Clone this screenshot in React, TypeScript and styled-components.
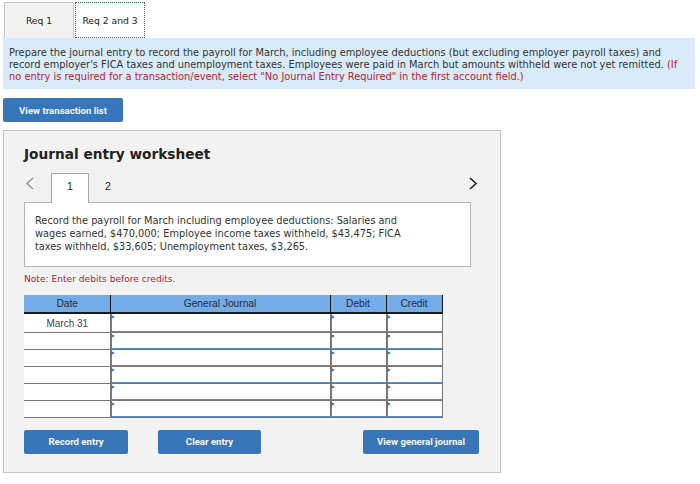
import React from 'react';
import styled, {createGlobalStyle} from 'styled-components';

const GlobalStyle = createGlobalStyle`
  html, body {
    margin: 0;
    padding: 0;
    background-color: white;
  }
  body {
    font-family: "DejaVu Sans", Verdana, sans-serif;
    font-size: 9.8px;
    color: #333333;
  }
`
const Page = styled.div`
  width: 700px;
  height: 484px;
  padding: 2px 5px 0 3px;
  box-sizing: border-box;
  overflow: hidden;
`
const Tabs = styled.div`
  display: flex;
  padding-left: 1px;
  gap: 1px;
`
const Tab = styled.div<{ $active?: boolean }>`
  width: 70px;
  height: 36px;
  box-sizing: border-box;
  display: flex;
  align-items: center;
  justify-content: center;
  font-size: 9.2px;
  color: #222222;
  background-color: ${p => p.$active ? 'white' : '#f2f2f2'};
  border: 1px ${p => p.$active ? 'dotted #2f5f9f' : 'solid #c4c4c4'};
  border-bottom: ${p => p.$active ? '1px dotted #2f5f9f' : 'none'};
`
const Instructions = styled.div`
  background-color: #d9ebfa;
  height: 51px;
  box-sizing: border-box;
  padding: 9px 6px 0;
  font-size: 9.85px;
  line-height: 12px;
  color: #333333;
  white-space: nowrap;
`
const Red = styled.span`
  color: #b4232f;
`
const Button = styled.button<{ $width: number }>`
  width: ${p => p.$width}px;
  height: 24px;
  padding: 0;
  border: none;
  border-radius: 2px;
  background-color: #3975b9;
  color: #f2f6fb;
  font-family: Roboto, "Liberation Sans", sans-serif;
  font-size: 9.6px;
  font-weight: 700;
`
const TopAction = styled.div`
  margin: 9px 0 8px;
  display: flex;
`
const Panel = styled.div`
  width: 498px;
  height: 343px;
  box-sizing: border-box;
  padding: 0 20px;
  background-color: #f2f2f2;
  border: 1px solid #c4c4c4;
`
const Title = styled.h2`
  margin: 0;
  padding-top: 14px;
  height: 42px;
  box-sizing: border-box;
  font-size: 13.7px;
  line-height: 18px;
  font-weight: 700;
  color: #222222;
`
const Pager = styled.div`
  display: flex;
  align-items: stretch;
  height: 30px;
  margin-bottom: -1px;
  position: relative;
  z-index: 1;
`
const Arrow = styled.svg`
  width: 27px;
  height: 22px;
  flex: none;
`
const PageTab = styled.div<{ $active?: boolean }>`
  width: 38px;
  box-sizing: border-box;
  padding-bottom: 6px;
  display: flex;
  align-items: center;
  justify-content: center;
  font-family: "Liberation Sans", Arial, sans-serif;
  font-size: 10.5px;
  color: #222222;
  background-color: ${p => p.$active ? 'white' : 'transparent'};
  border: 1px solid ${p => p.$active ? '#a8a8a8' : 'transparent'};
  border-bottom: none;
`
const Spacer = styled.div`
  flex: 1;
`
const Statement = styled.div`
  width: 447px;
  height: 65px;
  box-sizing: border-box;
  padding: 11px 10px 0;
  line-height: 13px;
  background-color: white;
  border: 1px solid #b4b4b4;
  color: #333333;
  white-space: nowrap;
`
const Note = styled.div`
  margin-top: 6px;
  height: 22px;
  font-size: 9.1px;
  line-height: 12px;
  color: #b4232f;
`
const Table = styled.table`
  width: 418px;
  table-layout: fixed;
  border-collapse: collapse;
  font-family: "Liberation Sans", Arial, sans-serif;
  font-size: 10.2px;
`
const Th = styled.th<{ $width: number }>`
  box-sizing: border-box;
  width: ${p => p.$width}px;
  height: 18px;
  padding: 0;
  background-color: #75abe6;
  color: #1f2b3a;
  font-weight: 400;
  border-left: 1px solid #1a1a1a;
  border-bottom: 2px solid #1a1a1a;
  &:first-child {
    border-left: none;
    padding-left: 1px;
  }
  &:last-child {
    border-right: 1px solid #1a1a1a;
  }
`
const Row = styled.tr<{ $first?: boolean }>`
  height: ${p => p.$first ? 19 : 17}px;
`
const DateCell = styled.td`
  padding: 1px 0 0 1px;
  text-align: center;
  font-size: 10px;
  color: #444444;
  background-color: white;
  border-bottom: 1px solid #757575;
`
const EntryCell = styled.td`
  position: relative;
  padding: 0;
  background-color: white;
  border-left: 1px solid #757575;
  border-bottom: 1px solid #757575;
  box-shadow: inset 1px 0 0 #4f86c6, inset 0 -1px 0 #5f8cc0;
  &:last-child {
    border-right: 1px solid #757575;
  }
  &::before {
    content: '';
    position: absolute;
    top: 1px;
    left: 0;
    border-left: 4px solid #3975b9;
    border-top: 2.5px solid transparent;
    border-bottom: 2.5px solid transparent;
  }
`
const Actions = styled.div`
  display: flex;
  margin-top: 12px;
  width: 455px;
`
const Gap = styled.div<{ $width: number }>`
  width: ${p => p.$width}px;
`

const rows = ['March 31', '', '', '', '', '']

const App: React.FC = () => {
    return (
        <Page>
            <GlobalStyle/>
            <Tabs>
                <Tab>Req 1</Tab>
                <Tab $active>Req 2 and 3</Tab>
            </Tabs>
            <Instructions>
                Prepare the journal entry to record the payroll for March, including employee deductions (but excluding employer payroll taxes) and<br/>
                record employer's FICA taxes and unemployment taxes. Employees were paid in March but amounts withheld were not yet remitted. <Red>(If</Red><br/>
                <Red>no entry is required for a transaction/event, select "No Journal Entry Required" in the first account field.)</Red>
            </Instructions>
            <TopAction>
                <Button $width={120}>View transaction list</Button>
            </TopAction>
            <Panel>
                <Title>Journal entry worksheet</Title>
                <Pager>
                    <Arrow viewBox="0 0 27 22">
                        <path d="M9 5 L3 10.5 L9 16" fill="none" stroke="#9a9a9a" strokeWidth="1.6"/>
                    </Arrow>
                    <PageTab $active>1</PageTab>
                    <PageTab>2</PageTab>
                    <Spacer/>
                    <Arrow viewBox="0 0 27 22">
                        <path d="M17 5 L23 10.5 L17 16" fill="none" stroke="#222222" strokeWidth="1.6"/>
                    </Arrow>
                </Pager>
                <Statement>
                    Record the payroll for March including employee deductions: Salaries and<br/>
                    wages earned, $470,000; Employee income taxes withheld, $43,475; FICA<br/>
                    taxes withheld, $33,605; Unemployment taxes, $3,265.
                </Statement>
                <Note>Note: Enter debits before credits.</Note>
                <Table>
                    <thead>
                        <tr>
                            <Th $width={86}>Date</Th>
                            <Th $width={220}>General Journal</Th>
                            <Th $width={56}>Debit</Th>
                            <Th $width={56}>Credit</Th>
                        </tr>
                    </thead>
                    <tbody>
                        {rows.map((date, i) => (
                            <Row key={i} $first={i === 0}>
                                <DateCell>{date}</DateCell>
                                <EntryCell/>
                                <EntryCell/>
                                <EntryCell/>
                            </Row>
                        ))}
                    </tbody>
                </Table>
                <Actions>
                    <Button $width={104}>Record entry</Button>
                    <Gap $width={30}/>
                    <Button $width={103}>Clear entry</Button>
                    <Gap $width={102}/>
                    <Button $width={116}>View general journal</Button>
                </Actions>
            </Panel>
        </Page>
    );
}

export default App
